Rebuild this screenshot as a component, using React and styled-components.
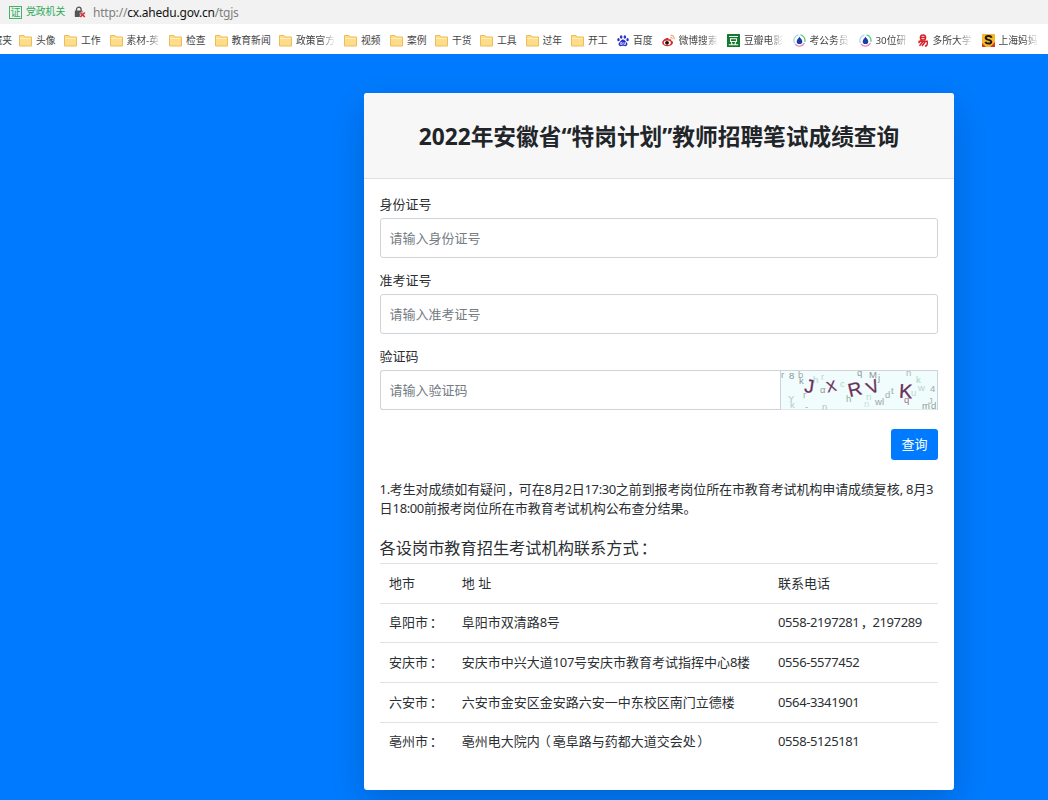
import React from 'react';
import styled, { createGlobalStyle, css } from 'styled-components';

const Global = createGlobalStyle`
  *, *::before, *::after { box-sizing: border-box; }
  html, body { margin: 0; height: 800px; overflow: hidden; }
  body {
    background: #007bff;
    font-family: "Noto Sans", "Noto Sans CJK SC", sans-serif;
    font-size: 13px;
    line-height: 19.5px;
    color: #2b2f33;
  }
`;

const Screen = styled.div`
  width: 1048px;
  height: 800px;
  display: flex;
  flex-direction: column;
  overflow: hidden;
`;

const AddressBar = styled.div`
  height: 24px;
  flex: none;
  display: flex;
  align-items: center;
  padding-left: 9px;
  background: #f2f2f2;
`;

const CertBadge = styled.span`
  width: 13px;
  height: 13px;
  border: 1px solid #3fb56b;
  color: #2fa95c;
  font-size: 10px;
  line-height: 10px;
  text-align: center;
`;

const CertName = styled.span`
  margin-left: 4px;
  width: 48px;
  color: #2fa95c;
  font-size: 9.8px;
  white-space: nowrap;
`;

const Url = styled.span`
  margin-left: 7px;
  padding-top: 1px;
  font-size: 12px;
  letter-spacing: -0.21px;
  color: #808080;
  white-space: nowrap;
  b { font-weight: 400; color: #111; }
`;

const BookmarkBar = styled.div`
  height: 30px;
  flex: none;
  display: flex;
  align-items: center;
  background: #fff;
  padding-top: 2px;
`;

const Bookmark = styled.div`
  flex: none;
  width: ${(p) => p.$w}px;
  display: flex;
  align-items: center;
  svg { flex: none; }
`;

const BookmarkText = styled.span`
  margin-left: 4px;
  padding-top: 1px;
  font-size: 9.8px;
  line-height: 16px;
  color: #444;
  white-space: nowrap;
  overflow: hidden;
  ${(p) => p.$fade && css`
    width: ${p.$fade}px;
    mask-image: linear-gradient(to right, #000 65%, transparent 105%);
  `}
`;

const ClippedText = styled.span`
  display: flex;
  justify-content: flex-end;
  width: 12px;
  padding-top: 1px;
  font-size: 9.8px;
  line-height: 16px;
  color: #444;
  overflow: hidden;
  white-space: nowrap;
`;

const Page = styled.main`
  flex: 1;
  min-height: 0;
  padding: 39px 94px 10px 364px;
  background: #007bff;
`;

const Card = styled.section`
  width: 590px;
  height: 697px;
  display: flex;
  flex-direction: column;
  background: #fff;
  border-radius: 3.25px;
  box-shadow: 0 13px 39px rgba(0, 0, 0, 0.175);
`;

const CardHeader = styled.header`
  height: 86px;
  flex: none;
  display: flex;
  align-items: center;
  justify-content: center;
  background: #f7f7f7;
  border-bottom: 1px solid #dfdfdf;
  border-radius: 3.25px 3.25px 0 0;
`;

const Title = styled.h1`
  margin: 0;
  padding-top: 3px;
  font-size: 22.7px;
  line-height: 28px;
  font-weight: 700;
  color: #212529;
  white-space: nowrap;
`;

const CardBody = styled.div`
  padding: 16px 16px 0 15.6px;
`;

const Field = styled.div`
  margin-bottom: 13px;
`;

const Label = styled.label`
  display: block;
  height: 22.5px;
`;

const InputGroup = styled.div`
  display: flex;
  height: 40.5px;
`;

const Input = styled.input`
  flex: 1;
  min-width: 0;
  height: 100%;
  padding: 1px 9px;
  border: 1px solid #ced4da;
  border-radius: ${(p) => (p.$joined ? '3px 0 0 3px' : '3px')};
  border-right-width: ${(p) => (p.$joined ? 0 : 1)}px;
  font: inherit;
  color: #495057;
  background: #fff;
  &::placeholder { color: #757c83; opacity: 1; }
`;

const CaptchaImage = styled.svg`
  flex: none;
  display: block;
`;

const Actions = styled.div`
  display: flex;
  justify-content: flex-end;
  margin-top: 19px;
`;

const SubmitButton = styled.button`
  width: 47px;
  height: 31px;
  padding: 0;
  border: 0;
  border-radius: 3px;
  background: #007bff;
  color: #fff;
  font: inherit;
`;

const Notice = styled.div`
  margin-top: 20px;
  white-space: nowrap;
`;

const NoticeLine = styled.p`
  margin: 0;
  line-height: 19.3px;
  letter-spacing: ${(p) => p.$tracking}px;
`;

const SubTitle = styled.h2`
  margin: 19px 0 5.4px;
  font-size: 16.2px;
  line-height: 20px;
  font-weight: 400;
`;

const Table = styled.div`
  display: flex;
  flex-direction: column;
`;

const Row = styled.div`
  display: grid;
  grid-template-columns: 72.8px 316.2px 1fr;
  height: 39.7px;
  align-items: center;
  padding-left: 9.4px;
  border-top: 1px solid #dee2e6;
  white-space: nowrap;
`;

const Latin = styled.span`
  letter-spacing: -0.38px;
`;

const Mark = styled.span`
  margin-left: ${(p) => p.$shift}em;
  margin-right: ${(p) => -p.$shift}em;
`;

const markShift = { '：': 0.14, '，': 0.1, '（': -0.16, '）': 0.1 };

function Mixed({ children }) {
  const parts = children.match(/[\x21-\x7e]+|[：，（）]|[^\x21-\x7e：，（）]+/g);
  return parts.map((part, i) => {
    if (markShift[part]) return <Mark key={i} $shift={markShift[part]}>{part}</Mark>;
    if (/^[\x21-\x7e]/.test(part)) return <Latin key={i}>{part}</Latin>;
    return <React.Fragment key={i}>{part}</React.Fragment>;
  });
}

const FolderIcon = () => (
  <svg width="13" height="13" viewBox="0 0 13 13">
    <path d="M.5 1.500h4.500l1 1.500h6.500v9H.5z" fill="#ffdc87" stroke="#edbd5c" />
    <path d="M1 4.500h11" stroke="#fff0bd" />
  </svg>
);

const PawIcon = () => (
  <svg width="12" height="13" viewBox="0 0 13 13" fill="#2932c8">
    <ellipse cx="4.500" cy="2.600" rx="1.400" ry="1.900" />
    <ellipse cx="8.500" cy="2.600" rx="1.400" ry="1.900" />
    <ellipse cx="1.600" cy="5.600" rx="1.300" ry="1.700" />
    <ellipse cx="11.400" cy="5.600" rx="1.300" ry="1.700" />
    <path d="M6.500 5.400c2 0 2.400 1.900 4 3.300 1.600 1.600.7 3.900-1.400 3.900-1 0-1.600-.3-2.600-.3s-1.600.3-2.600.3c-2.100 0-3-2.300-1.400-3.900 1.600-1.400 2-3.300 4-3.300z" />
    <path d="M4 8.800h1.600v2H4zM7.500 8.300v2.500h1.700V8.300" fill="none" stroke="#fff" strokeWidth=".8" />
  </svg>
);

const WeiboIcon = () => (
  <svg width="13" height="13" viewBox="0 0 13 13">
    <path d="M5 4C2.500 4.500 0 7 .2 9c.2 2 2.800 3.300 5.500 3.200 3-.1 5.300-1.700 5.300-3.600 0-1.200-1-1.700-1.700-1.900.3-1.500-.8-1.900-2.600-1.200C6.900 4.300 6.300 3.700 5 4z" fill="#d52a2e" />
    <ellipse cx="5.300" cy="8.800" rx="3.500" ry="2.300" fill="#fff" />
    <circle cx="5" cy="8.800" r="1.900" fill="#111" />
    <path d="M8.300 1.300c2.500-.5 4.300 1.500 3.700 4M8.500 3.400c1.100-.2 1.700.6 1.500 1.500" fill="none" stroke="#f0a070" strokeWidth="1.100" />
  </svg>
);

const DoubanIcon = () => (
  <svg width="13" height="13" viewBox="0 0 13 13">
    <rect width="13" height="13" rx=".5" fill="#127a2b" />
    <path d="M2 2.500h9M3.500 4.700h6v2.800h-6zM4.300 8.200l.8 2M8.700 8.200l-.8 2M1.800 10.700h9.400" fill="none" stroke="#fff" strokeWidth="1.100" />
  </svg>
);

const RingIcon = () => (
  <svg width="13" height="13" viewBox="0 0 13 13" fill="none" strokeWidth="1.300">
    <path d="M5.500 .9A5.700 5.700 0 0 0 1.500 9" stroke="#a8d4ee" />
    <path d="M7.500 .9a5.700 5.700 0 0 1 4.300 7" stroke="#55c98a" />
    <path d="M2 10a5.700 5.700 0 0 0 9.400-.9" stroke="#e58cc0" />
    <path d="M6.500 2.600C7 4.500 9.300 5.300 9.300 7.400A2.800 2.600 0 0 1 3.700 7.400C3.700 5.300 6 4.500 6.500 2.600z" fill="#1b3fa8" />
  </svg>
);

const SealIcon = () => (
  <svg width="12" height="13" viewBox="0 0 12 13" fill="none" stroke="#d8232a" strokeWidth="1.500">
    <circle cx="6" cy="3.500" r="2.600" />
    <path d="M3.500 3.500h5M1.500 7.300h8.700c.5 2.700-.2 4.500-2.200 4.900M4.500 6L1.500 9M6 7.500L2.500 11.700M8.300 7.500L5 12" />
  </svg>
);

const SIcon = () => (
  <svg width="13" height="13" viewBox="0 0 13 13">
    <rect width="13" height="13" rx="1" fill="#f8b62b" />
    <path d="M0 9l4 4H0zM13 8l-5 5h5z" fill="#d33a24" />
    <path d="M9.700 3.700C8.800 1.500 3.700 1.400 3.700 4c0 2.300 5.600 1.300 5.600 3.700 0 2.500-5 2.400-6 .1" fill="none" stroke="#151515" strokeWidth="1.900" />
  </svg>
);

const LockIcon = () => (
  <svg width="12" height="12" viewBox="0 0 12 12">
    <path d="M2.500 5V3.500a2.300 2.300 0 0 1 4.600 0V5" fill="none" stroke="#555" strokeWidth="1.300" />
    <rect x=".8" y="4.500" width="7.700" height="6.500" rx=".5" fill="#555" />
    <path d="M6.300 6.500l4.500 4.500M10.800 6.500L6.300 11" stroke="#f2f2f2" strokeWidth="2.600" />
    <path d="M6.300 6.500l4.500 4.500M10.800 6.500L6.300 11" stroke="#d9303a" strokeWidth="1.700" />
  </svg>
);

const bookmarks = [
  ['头像', 45, FolderIcon],
  ['工作', 45.500, FolderIcon],
  ['素材-英', 59.500, FolderIcon, 32],
  ['检查', 45.500, FolderIcon],
  ['教育新闻', 64.500, FolderIcon],
  ['政策官方', 65, FolderIcon, 38],
  ['视频', 46, FolderIcon],
  ['案例', 45, FolderIcon],
  ['干货', 45, FolderIcon],
  ['工具', 45.500, FolderIcon],
  ['过年', 45.500, FolderIcon],
  ['开工', 46, FolderIcon],
  ['百度', 44.500, PawIcon],
  ['微博搜索', 65.500, WeiboIcon, 38],
  ['豆瓣电影', 65.500, DoubanIcon, 38],
  ['考公务员', 66, RingIcon, 38],
  ['30位研', 58, RingIcon, 31],
  ['多所大学', 65, SealIcon, 38],
  ['上海妈妈', 66, SIcon, 38],
];

const contacts = [
  ['地市', '地 址', '联系电话'],
  ['阜阳市：', '阜阳市双清路8号', '0558-2197281，2197289'],
  ['安庆市：', '安庆市中兴大道107号安庆市教育考试指挥中心8楼', '0556-5577452'],
  ['六安市：', '六安市金安区金安路六安一中东校区南门立德楼', '0564-3341901'],
  ['亳州市：', '亳州电大院内（亳阜路与药都大道交会处）', '0558-5125181'],
];

const captchaNoise = [
  ['r', 1, 8, '#9a9fa4'], ['8', 9, 9, '#8e9099'], ['b', 18, 8, '#a3abb0'], ['k', 19, 14, '#8d98a0'],
  ['h', 33, 13, '#b9d4c8'], ['r', 41, 10, '#b3dcd0'], ['r', 23, 28, '#a9aab5'], ['α', 40, 23, '#8f989c'],
  ['c', 60, 17, '#aed6c2'], ['h', 66, 32, '#92b0a4'], ['q', 77, 6, '#9299a5'], ['M', 89, 8, '#8c929b'],
  ['j', 98, 11, '#8aa096'], ['n', 86, 30, '#b5ddcf'], ['n', 84, 37, '#c9e3dc'], ['w', 95, 35, '#9aa3a8'],
  ['l', 102, 35, '#9aa3a8'], ['d', 105, 28, '#a0acaf'], ['t', 111, 24, '#99aca6'], ['n', 126, 6, '#aab6b8'],
  ['k', 136, 13, '#a5d8b5'], ['u', 131, 26, '#c0d8d4'], ['w', 138, 21, '#bcd2d0'], ['q', 124, 33, '#9c7190'],
  ['4', 150, 22, '#9ba8b5'], ['J', 148, 34, '#a5b9af'], ['m', 142, 39, '#8c9b96'], ['d', 151, 39, '#8aa096'],
  ['Y', 8, 32, '#b4c9c4'], ['k', 10, 38, '#b7cbc6'], ['n', 42, 40, '#aac8bb'], ['-', 25, 40, '#9fa9ab'],
];

const captchaLetters = [
  ['J', 24.5, 23, 19, 8], ['X', 46, 21.5, 15, -12], ['R', 68, 26, 19, -14], ['V', 87, 23, 18, -25], ['K', 119, 28, 20, 3],
];

function Captcha() {
  return (
    <CaptchaImage width="158" height="40.5" viewBox="0 0 158 40.5">
      <rect width="158" height="40.5" fill="#f1fcfc" />
      <g fontFamily="Liberation Sans, sans-serif" fontSize="9.5">
        {captchaNoise.map(([c, x, y, fill], i) => <text key={i} x={x} y={y} fill={fill}>{c}</text>)}
      </g>
      <g fontFamily="Liberation Sans, sans-serif" fill="#6b2f5b" stroke="#6b2f5b" strokeWidth=".25">
        {captchaLetters.map(([c, x, y, size, r]) => (
          <text key={c} x={x} y={y} fontSize={size} transform={`rotate(${r} ${x + 6} ${y - 6})`}>{c}</text>
        ))}
      </g>
      <rect x=".5" y=".5" width="157" height="39.5" fill="none" stroke="#ced4da" />
    </CaptchaImage>
  );
}

export default function App() {
  return (
    <Screen>
      <Global />
      <AddressBar>
        <CertBadge>证</CertBadge>
        <CertName>党政机关</CertName>
        <LockIcon />
        <Url>http://<b>cx.ahedu.gov.cn</b>/tgjs</Url>
      </AddressBar>
      <BookmarkBar>
        <Bookmark $w={19}><ClippedText>藏夹</ClippedText></Bookmark>
        {bookmarks.map(([name, w, Icon, fade]) => (
          <Bookmark key={name} $w={w}>
            <Icon />
            <BookmarkText $fade={fade}>{name}</BookmarkText>
          </Bookmark>
        ))}
      </BookmarkBar>
      <Page>
        <Card>
          <CardHeader>
            <Title>2022年安徽省“特岗计划”教师招聘笔试成绩查询</Title>
          </CardHeader>
          <CardBody>
            <Field>
              <Label>身份证号</Label>
              <InputGroup><Input placeholder="请输入身份证号" /></InputGroup>
            </Field>
            <Field>
              <Label>准考证号</Label>
              <InputGroup><Input placeholder="请输入准考证号" /></InputGroup>
            </Field>
            <Field>
              <Label>验证码</Label>
              <InputGroup>
                <Input $joined placeholder="请输入验证码" />
                <Captcha />
              </InputGroup>
            </Field>
            <Actions><SubmitButton>查询</SubmitButton></Actions>
            <Notice>
              <NoticeLine $tracking={-0.1}>
                <Mixed>1.考生对成绩如有疑问，可在8月2日17:30之前到报考岗位所在市教育考试机构申请成绩复核, 8月3</Mixed>
              </NoticeLine>
              <NoticeLine $tracking={-0.02}>
                <Mixed>日18:00前报考岗位所在市教育考试机构公布查分结果。</Mixed>
              </NoticeLine>
            </Notice>
            <SubTitle><Mixed>各设岗市教育招生考试机构联系方式：</Mixed></SubTitle>
            <Table>
              {contacts.map((row) => (
                <Row key={row[0]}>
                  {row.map((cell) => <span key={cell}><Mixed>{cell}</Mixed></span>)}
                </Row>
              ))}
            </Table>
          </CardBody>
        </Card>
      </Page>
    </Screen>
  );
}
